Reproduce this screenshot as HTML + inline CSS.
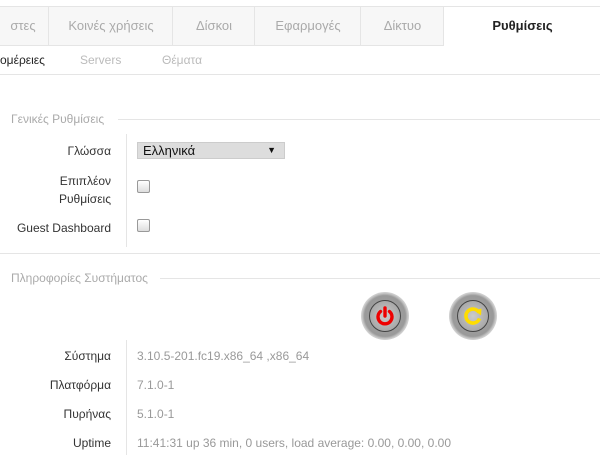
<!DOCTYPE html>
<html><head><meta charset="utf-8"><style>
body{margin:0;width:600px;height:455px;overflow:hidden;background:#fff;font-family:"Liberation Sans",sans-serif;font-size:12px;position:relative}
.a{position:absolute}
.tabs{top:6px;left:0;width:600px;height:38px;border-top:1px solid #e5e5e5;border-bottom:1px solid #e5e5e5;background:#f7f7f7}
.tab{position:absolute;top:0;height:38px;line-height:38px;text-align:center;color:#aaa;font-size:13px;border-left:1px solid #e5e5e5}
.sub{top:53px;font-size:12px;color:#bbb}
.lab{right:489px;text-align:right;color:#333;font-size:12px}
.val{left:137px;color:#999;font-size:12px}
.cb{left:137px;width:11px;height:11px;border:1px solid #999;border-radius:2px;background:linear-gradient(#fff,#ddd)}
.btn{width:48px;height:48px;border-radius:50%;background:radial-gradient(circle,#aaa 0,#999 60%,#ccc 68%,#fff 100%);}
.in{position:absolute;left:8px;top:8px;width:30px;height:30px;border-radius:50%;border:1px solid #444;background:radial-gradient(circle,#ccc,#999)}
</style></head><body>
<div class="a tabs">
<div class="tab" style="left:-1px;width:48px;border:none">στες</div>
<div class="tab" style="left:48px;width:124px">Κοινές χρήσεις</div>
<div class="tab" style="left:172px;width:82px">Δίσκοι</div>
<div class="tab" style="left:254px;width:106px">Εφαρμογές</div>
<div class="tab" style="left:360px;width:83px">Δίκτυο</div>
<div class="tab" style="left:443px;width:157px;height:39px;background:#fff;color:#222;font-weight:bold">Ρυθμίσεις</div>
</div>
<div class="a sub" style="left:0;color:#222">ομέρειες</div>
<div class="a sub" style="left:80px">Servers</div>
<div class="a sub" style="left:162px">Θέματα</div>
<div class="a" style="top:74px;left:0;width:600px;border-top:1px solid #e5e5e5"></div>

<div class="a" style="top:112px;left:11px;color:#aaa">Γενικές Ρυθμίσεις</div>
<div class="a" style="top:119px;left:118px;width:482px;border-top:1px solid #e5e5e5"></div>
<div class="a" style="top:134px;left:126px;height:113px;border-left:1px solid #e5e5e5"></div>
<div class="a lab" style="top:144px">Γλώσσα</div>
<div class="a" style="top:142px;left:137px;width:148px;height:17px;background:#ddd;border:1px solid #ccc;box-sizing:border-box;font-size:13px;line-height:15px;padding-left:5px;color:#111">Ελληνικά<span style="position:absolute;right:8px;font-size:9px">▼</span></div>
<div class="a lab" style="top:174px">Επιπλέον</div>
<div class="a lab" style="top:192px">Ρυθμίσεις</div>
<div class="a cb" style="top:180px"></div>
<div class="a lab" style="top:221px">Guest Dashboard</div>
<div class="a cb" style="top:219px"></div>
<div class="a" style="top:253px;left:0;width:600px;border-top:1px solid #e5e5e5"></div>

<div class="a" style="top:271px;left:11px;color:#aaa">Πληροφορίες Συστήματος</div>
<div class="a" style="top:278px;left:160px;width:440px;border-top:1px solid #e5e5e5"></div>
<div class="a btn" style="left:361px;top:292px"><div class="in"><svg width="30" height="30" viewBox="0 0 30 30"><path d="M10.5 10.5A7 7 0 1 0 19.5 10.5" fill="none" stroke="#e00" stroke-width="3.4" stroke-linecap="round"/><path d="M15 7V15" stroke="#e00" stroke-width="3.4" stroke-linecap="round"/></svg></div></div>
<div class="a btn" style="left:449px;top:292px"><div class="in"><svg width="30" height="30" viewBox="0 0 30 30"><path d="M21 11.5A7 7 0 1 0 21.5 17.5" fill="none" stroke="#fd0" stroke-width="3.6"/><path d="M16.5 9.5L23.5 7.5 23 14.5Z" fill="#fd0"/></svg></div></div>

<div class="a lab" style="top:349px">Σύστημα</div><div class="a val" style="top:349px">3.10.5-201.fc19.x86_64 ,x86_64</div>
<div class="a lab" style="top:378px">Πλατφόρμα</div><div class="a val" style="top:378px">7.1.0-1</div>
<div class="a lab" style="top:407px">Πυρήνας</div><div class="a val" style="top:407px">5.1.0-1</div>
<div class="a lab" style="top:436px">Uptime</div><div class="a val" style="top:436px">11:41:31 up 36 min, 0 users, load average: 0.00, 0.00, 0.00</div>
<div class="a" style="top:340px;left:126px;height:115px;border-left:1px solid #e5e5e5"></div>
</body></html>
